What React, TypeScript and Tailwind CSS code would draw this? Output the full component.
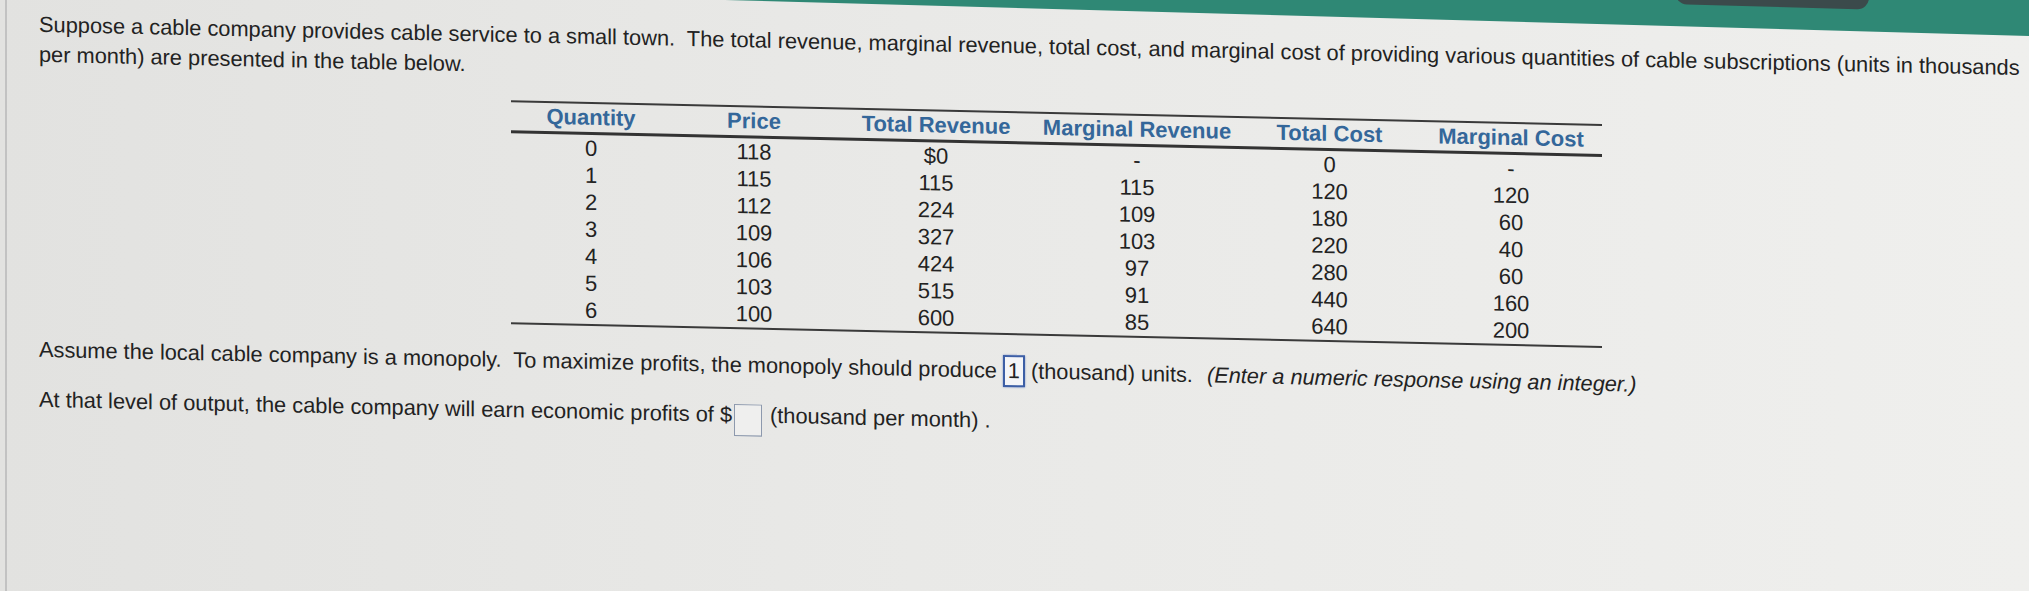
import React from "react";

const rows = [
  ["0", "118", "$0", "-", "0", "-"],
  ["1", "115", "115", "115", "120", "120"],
  ["2", "112", "224", "109", "180", "60"],
  ["3", "109", "327", "103", "220", "40"],
  ["4", "106", "424", "97", "280", "60"],
  ["5", "103", "515", "91", "440", "160"],
  ["6", "100", "600", "85", "640", "200"],
];

const headers = ["Quantity", "Price", "Total Revenue", "Marginal Revenue", "Total Cost", "Marginal Cost"];

export default function App() {
  return (
    <div
      className="relative h-[591px] w-[2029px] overflow-hidden bg-[linear-gradient(90deg,#e2e2e0_0%,#e9e9e7_45%,#efefed_100%)] text-[#222222]"
      style={{ fontFamily: '"Liberation Sans", Arial, sans-serif' }}
    >
      <div className="absolute left-[5px] top-0 h-full w-[2px] bg-[#c2c2c2]" />
      <div className="origin-top-left skew-y-[1.25deg] -mt-[70px]">
        <header className="flex h-[50px] origin-top-left skew-y-[0.33deg] items-end justify-end bg-[#2f8875] pb-[22px] pr-[160px]">
          <div className="h-[40px] w-[194px] rounded-[12px] bg-[#3b4a4b]" />
        </header>
        <main className="pl-[39px] pt-[29px]">
          <p className="text-[21.8px] leading-[30px]">
            <span className="block whitespace-nowrap">
              Suppose a cable company provides cable service to a small town.{"\u00a0"} The total revenue, marginal revenue, total cost, and marginal cost of providing various quantities of cable subscriptions (units in thousands
            </span>
            <span className="block whitespace-nowrap">per month) are presented in the table below.</span>
          </p>

          <div className="ml-[472px] mt-[20px] w-[1091px] border-t-2 border-b-2 border-[#3a3a3a] text-[22px]">
            <div className="grid h-[31px] grid-cols-[160px_166px_198px_204px_181px_182px] items-start border-b-[3px] border-[#333333] font-bold leading-[27px] text-[#34679a]">
              {headers.map((h) => (
                <div key={h} className="text-center">{h}</div>
              ))}
            </div>
            {rows.map((r, i) => (
              <div key={i} className="grid h-[27px] grid-cols-[160px_166px_198px_204px_181px_182px] items-center leading-[27px]">
                {r.map((c, j) => (
                  <div key={j} className="text-center">{c}</div>
                ))}
              </div>
            ))}
          </div>

          <p className="mt-[19px] flex h-[34px] items-center whitespace-nowrap text-[21.75px]">
            <span>Assume the local cable company is a monopoly.{"\u00a0"} To maximize profits, the monopoly should produce</span>
            <span className="mx-[6px] inline-flex h-[32px] w-[22px] items-center justify-center border-2 border-[#3d5fa6] bg-[#f4f5f8] shadow-[0_0_2px_#6b84c4]">1</span>
            <span>(thousand) units.{"\u00a0"} </span>
            <span className="ml-[8px] italic">(Enter a numeric response using an integer.)</span>
          </p>

          <p className="mt-[16px] flex h-[34px] items-center whitespace-nowrap text-[21.8px]">
            <span>At that level of output, the cable company will earn economic profits of $</span>
            <span className="ml-[2px] mr-[8px] mt-[10px] inline-block h-[32px] w-[28px] border border-[#8d99ad] bg-[#efefee]" />
            <span>(thousand per month)</span>
            <span className="ml-[6px]">.</span>
          </p>
        </main>
      </div>
    </div>
  );
}
